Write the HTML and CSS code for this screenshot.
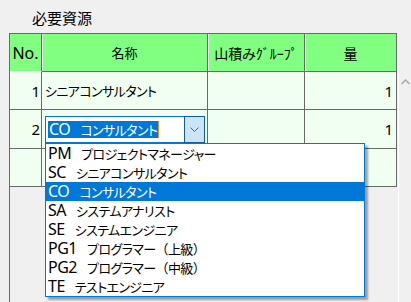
FILE: index.html
```html
<!DOCTYPE html>
<html lang="ja">
<head>
    <meta charset="UTF-8">
    <title>必要資源</title>
    <link rel="stylesheet" href="styles.css">
</head>
<body>
    <div class="title"><span class="jp">必要資源</span></div>
    <div class="grid-area">
        <div class="grid">
            <div class="cell head no">No.</div>
            <div class="cell head"><span class="jp name-head">名称</span></div>
            <div class="cell head"><span class="jp">山積みｸﾞﾙｰﾌﾟ</span></div>
            <div class="cell head"><span class="jp">量</span></div>

            <div class="cell no num">1</div>
            <div class="cell"><span class="jp">シニアコンサルタント</span></div>
            <div class="cell"></div>
            <div class="cell num">1</div>

            <div class="cell no num">2</div>
            <div class="cell edit">
                <div class="combo">
                    <span class="combo-text"><span class="code">CO</span><span class="jp">コンサルタント</span></span>
                    <span class="caret"></span>
                    <span class="combo-btn">
                        <svg width="9" height="5" viewBox="0 0 9 5"><path d="M0.5 0.5 L4.5 4.5 L8.5 0.5" fill="none" stroke="#606060" stroke-width="1"/></svg>
                    </span>
                </div>
            </div>
            <div class="cell"></div>
            <div class="cell num">1</div>

            <div class="cell no"></div>
            <div class="cell"></div>
            <div class="cell"></div>
            <div class="cell"></div>
        </div>
        <div class="vscroll">
            <svg width="9" height="6" viewBox="0 0 9 6"><path d="M0.5 5 L4.5 1 L8.5 5" fill="none" stroke="#a6a6a6" stroke-width="1.5"/></svg>
        </div>

        <!-- ドロップダウン -->
        <ul class="droplist">
            <li><span class="code">PM</span><span class="jp">プロジェクトマネージャー</span></li>
            <li><span class="code">SC</span><span class="jp">シニアコンサルタント</span></li>
            <li class="sel"><span class="code">CO</span><span class="jp">コンサルタント</span></li>
            <li><span class="code">SA</span><span class="jp">システムアナリスト</span></li>
            <li><span class="code">SE</span><span class="jp">システムエンジニア</span></li>
            <li><span class="code">PG1</span><span class="jp">プログラマー<span class="paren">（</span>上級<span class="paren">）</span></span></li>
            <li><span class="code">PG2</span><span class="jp">プログラマー<span class="paren">（</span>中級<span class="paren">）</span></span></li>
            <li><span class="code">TE</span><span class="jp">テストエンジニア</span></li>
        </ul>
    </div>
</body>
</html>
```

FILE: styles.css
```css
body {
    margin: 0;
    background: #f0f0f0;
    color: #000;
    font-family: "Noto Sans", "Noto Sans CJK JP", sans-serif;
    font-size: 16px;
    overflow: hidden;
}
.jp {
    font-family: "Noto Sans CJK JP", sans-serif;
    font-size: 13px;
    letter-spacing: -0.6px;
    font-feature-settings: "palt";
}
.paren {
    font-feature-settings: normal;
}
.code {
    letter-spacing: -0.5px;
    margin-right: 10px;
}
.title {
    height: 33px;
    box-sizing: border-box;
    padding: 8px 0 0 32px;
    line-height: 20px;
}
.title .jp {
    font-size: 15px;
    letter-spacing: 0;
}
.grid-area {
    position: relative;
    display: flex;
    height: 269px;
}
.grid {
    display: grid;
    grid-template-columns: 32px 166px 97px 92px;
    grid-template-rows: 39px 38px 39px 38px;
    align-content: start;
    margin-left: 9px;
    border-left: 1px solid #696969;
}
.cell {
    box-sizing: border-box;
    background: #f0fff0;
    border-right: 1px solid #696969;
    border-bottom: 1px solid #696969;
    display: flex;
    align-items: center;
    padding: 0 3px;
    white-space: nowrap;
}
.cell.head {
    background: #80ff80;
    border-top: 1px solid #696969;
    justify-content: center;
    box-shadow: inset 1px 0 0 #fff;
    padding: 0;
}
.cell.head .jp {
    font-size: 14px;
    letter-spacing: 0;
}
.cell.head .name-head {
    font-size: 13px;
}
.cell.head.no {
    box-shadow: none;
    border-bottom-color: #fff;
}
.cell.num {
    justify-content: flex-end;
    font-size: 15px;
}
.cell.no.num {
    padding-right: 1px;
}
.cell.edit {
    padding: 0 2px 0 3px;
}
.combo {
    position: relative;
    display: flex;
    align-items: center;
    width: 161px;
    height: 27px;
    box-sizing: border-box;
    border: 1px solid #0078d7;
    background: #fff;
}
.combo-text {
    margin-left: 2px;
    padding: 0 1px;
    background: #0078d7;
    color: #fff;
    line-height: 17px;
    height: 17px;
    white-space: nowrap;
}
.caret {
    width: 1px;
    height: 17px;
    background: #f08a24;
}
.combo-btn {
    margin-left: auto;
    width: 21px;
    height: 27px;
    margin-right: -1px;
    box-sizing: border-box;
    border: 1px solid #0b5fa5;
    background: #cce4f7;
    display: flex;
    align-items: center;
    justify-content: center;
}
.vscroll {
    margin: 40px 0 0 1px;
    flex: 1;
    border-left: 1px solid #fff;
    background: #f0f0f0;
    display: flex;
    justify-content: center;
    align-items: flex-start;
    padding-top: 6px;
}
.droplist {
    position: absolute;
    left: 45px;
    top: 110px;
    width: 320px;
    margin: 0;
    padding: 0;
    list-style: none;
    box-sizing: border-box;
    border: 1px solid #0078d7;
    background: #fff;
    box-shadow: 3px 3px 2px rgba(0, 0, 0, 0.35);
}
.droplist li {
    height: 19px;
    line-height: 19px;
    padding-left: 2px;
    white-space: nowrap;
}
.droplist li.sel {
    background: #0078d7;
    color: #fff;
}
```
